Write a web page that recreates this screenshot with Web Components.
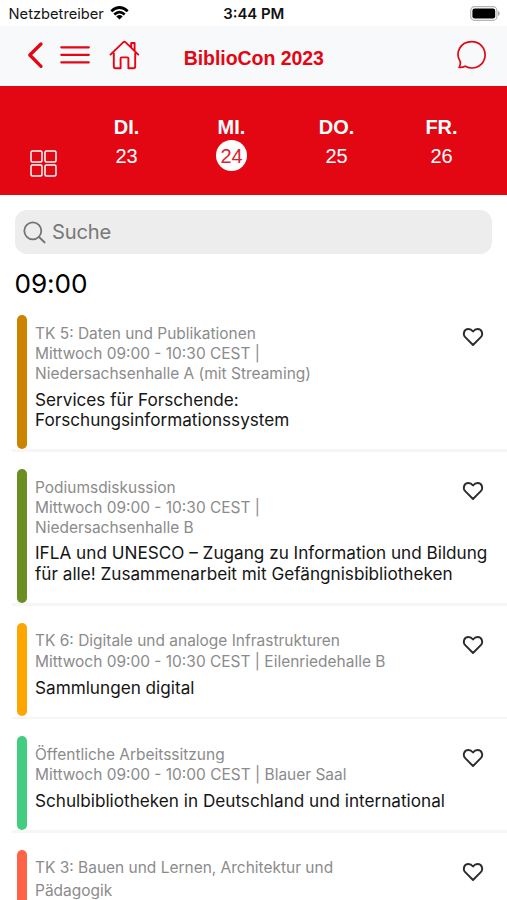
<!DOCTYPE html>
<html lang="de"><head><meta charset="utf-8"><title>BiblioCon 2023</title>
<style>html,body{margin:0;background:#fff}body{height:900px;overflow:hidden;font-family:Inter,"Liberation Sans",sans-serif}</style>
</head><body>
<programme-app></programme-app>
<script>
const define = (name, html) => customElements.define(name, class extends HTMLElement {
  constructor() {
    super();
    const t = document.createElement('template');
    t.innerHTML = html;
    this.attachShadow({mode: 'open'}).append(t.content.cloneNode(true));
  }
});

define('status-bar', `
<style>
:host{display:grid;grid-template-columns:1fr auto 1fr;align-items:center;height:26px;box-sizing:border-box;padding:1px 7px 0 8.5px;color:#151515;background:#fff}
.left{display:flex;align-items:center;gap:6px;font-size:14.7px;line-height:20px}
.time{font-size:14.9px;font-weight:600;line-height:20px;color:#111;margin-left:-1px}
.right{display:flex;justify-content:flex-end}
svg{display:block}
</style>
<div class="left"><span>Netzbetreiber</span>
<svg width="19" height="15" viewBox="0 0 19 15"><g fill="none" stroke="#000" stroke-width="2.7"><path d="M1.3 5.2Q9.5-2.2 17.7 5.2"/><path d="M4.3 8.5Q9.5 3.8 14.7 8.5"/></g><path d="M6.3 10.4Q9.5 7.8 12.7 10.4L9.5 13.6Z"/></svg></div>
<div class="time">3:44 PM</div>
<div class="right"><svg width="30" height="15" viewBox="0 0 30 15"><rect x=".7" y=".7" width="26.2" height="13.6" rx="3.8" fill="#fff" stroke="#b4b4b4" stroke-width="1.2"/><rect x="2.4" y="2.4" width="22.8" height="10.2" rx="2.3"/><path d="M28 5v5q1.8-.7 1.8-2.5T28 5Z" fill="#aaa"/></svg></div>`);

define('nav-bar', `
<style>
:host{display:grid;grid-template-columns:1fr auto 1fr;align-items:center;height:60px;box-sizing:border-box;padding:0 20px 0 26.5px;background:#f8f9fb;color:#e30613}
.left{display:flex;align-items:center;margin-top:-3px}
.right{display:flex;justify-content:flex-end;margin-top:-3px}
svg{display:block;fill:none;stroke:currentColor;stroke-linecap:round;stroke-linejoin:round}
.menu{margin-left:16px}.home{margin-left:19.5px}
.title{font:700 19.5px/24px "Liberation Sans",Arial,sans-serif;padding-top:4px;margin:0 3px 0 -3px;letter-spacing:-.05px}
</style>
<div class="left">
<svg width="17" height="28" viewBox="0 0 17 28" stroke-width="3.3"><path d="M14 3 2.8 14 14 25.3"/></svg>
<svg class="menu" width="30" height="20" viewBox="0 0 30 20" stroke-width="2.2"><path d="M1.3 2.3h27.5M1.3 9.8h27.5M1.3 17.3h27.5"/></svg>
<svg class="home" width="31" height="30" viewBox="0 0 31 30" stroke-width="1.9"><path d="M4.8 13.2v13.3q0 1.8 1.8 1.8h5V18.4q0-1 1-1h5.8q1 0 1 1v9.9h5q1.8 0 1.8-1.8V13.2"/><path d="M1.5 14.6 14.4 2.1q1-.9 2 0l12.9 12.5M22.2 7.5V3h3.4v7.7"/></svg>
</div>
<div class="title"><slot></slot></div>
<div class="right"><svg width="31" height="30" viewBox="0 0 31 30" stroke-width="1.7"><path d="M4.2 21.5C-1.3 12.6 4.5 1.7 15.7 1.7c7.9 0 13.4 6 13.4 13.1 0 7.3-5.6 13.2-13.2 13.2-2.6 0-4.8-.8-6.6-1.8-1.7.9-4.2 1.4-6.2 1.2.9-1.7 1.6-3.9 1.1-5.9Z"/></svg></div>`);

define('day-tab', `
<style>
:host{display:flex;flex-direction:column;align-items:center;width:105px;color:#fff;font-family:"Liberation Sans",Arial,sans-serif}
.name{font-size:20px;font-weight:700;line-height:24px}
.num{display:grid;place-items:center;width:31px;height:31px;margin-top:1px;padding-top:2px;box-sizing:border-box;border-radius:50%;font-size:20px;line-height:23px;letter-spacing:-.1px}
:host([selected]) .num{background:#fff;color:#d9232e}
</style>
<div class="name"><slot name="name"></slot></div><div class="num"><slot></slot></div>`);

define('day-bar', `
<style>
:host{display:flex;height:109px;box-sizing:border-box;padding:29px 0 0;background:#e30613}
.grid{width:74px;padding:34.5px 0 0 30px;box-sizing:border-box}
svg{display:block;fill:none;stroke:#fff;stroke-width:1.5}
</style>
<div class="grid"><svg width="27" height="27" viewBox="0 0 27 27"><rect x="1" y="1" width="11" height="11" rx="1.5"/><rect x="15" y="1" width="11" height="11" rx="1.5"/><rect x="1" y="15" width="11" height="11" rx="1.5"/><rect x="15" y="15" width="11" height="11" rx="1.5"/></svg></div>
<slot></slot>`);

define('search-field', `
<style>
:host{display:flex;align-items:center;gap:6px;height:44px;margin:15px 15px 0;box-sizing:border-box;padding:0 8px;border-radius:12px;background:#ededed;color:#777;font-size:20.1px;line-height:26px;letter-spacing:-.15px}
svg{display:block;fill:none;stroke:#747474;stroke-width:1.8;stroke-linecap:round}
</style>
<svg width="23" height="23" viewBox="0 0 23 23"><circle cx="9.8" cy="9.8" r="8.5"/><path d="m16 16 5.7 5.5"/></svg><span><slot></slot></span>`);

define('time-heading', `
<style>:host{display:block;height:61px;box-sizing:border-box;padding:14px 0 0 14.5px;font-size:26.2px;line-height:32px;letter-spacing:-.1px;color:#000}</style><slot></slot>`);

define('session-item', `
<style>
:host{display:block;padding-left:16.5px;margin-bottom:20px}
.row{display:flex;align-items:stretch}
.bar{flex:none;width:10px;border-radius:5px;background:var(--track)}
.body{flex:1;min-width:0;padding:6.7px 0 17.9px 8.5px}
.head{display:flex;justify-content:space-between}
.meta{font-size:15.48px;color:#8b8b8b}
.cat{line-height:23px}
.time{line-height:19.7px;margin-top:-.5px}
.title{font-size:17.16px;line-height:20.7px;color:#151515;margin-top:6px;white-space:nowrap}
svg{flex:none;display:block;width:22px;height:20px;margin:5.3px 23.5px 0 0;fill:none;stroke:#2c2c2c;stroke-width:1.9;stroke-linejoin:round}
.line{height:2.5px;margin:.3px 0 -2.8px -5px;background:#f6f6f6}
</style>
<div class="row"><div class="bar"></div><div class="body">
<div class="head"><div class="meta"><div class="cat"><slot name="category"></slot></div><div class="time"><slot name="time"></slot></div></div>
<svg viewBox="0 0 22 20"><path d="M11 18 3.2 10.2C.6 7.5 1.8 2 6.4 2c2 0 3.3.8 4.6 2.5C12.3 2.8 13.6 2 15.6 2c4.6 0 5.8 5.5 3.2 8.2Z"/></svg></div>
<div class="title"><slot></slot></div></div></div>
<div class="line"></div>`);

define('programme-app', `
<style>:host{display:block;width:507px;height:900px;overflow:hidden;background:#fff}</style>
<status-bar></status-bar>
<nav-bar>BiblioCon 2023</nav-bar>
<day-bar>
<day-tab><span slot="name">DI.</span>23</day-tab>
<day-tab selected><span slot="name">MI.</span>24</day-tab>
<day-tab><span slot="name">DO.</span>25</day-tab>
<day-tab><span slot="name">FR.</span>26</day-tab>
</day-bar>
<search-field>Suche</search-field>
<time-heading>09:00</time-heading>
<session-item style="--track:#cc8400"><span slot="category">TK 5: Daten und Publikationen</span><span slot="time">Mittwoch 09:00 - 10:30 CEST |<br>Niedersachsenhalle A (mit Streaming)</span>Services für Forschende:<br>Forschungsinformationssystem</session-item>
<session-item style="--track:#6b8e23"><span slot="category">Podiumsdiskussion</span><span slot="time">Mittwoch 09:00 - 10:30 CEST |<br>Niedersachsenhalle B</span>IFLA und UNESCO – Zugang zu Information und Bildung<br>für alle! Zusammenarbeit mit Gefängnisbibliotheken</session-item>
<session-item style="--track:#ffa500"><span slot="category">TK 6: Digitale und analoge Infrastrukturen</span><span slot="time">Mittwoch 09:00 - 10:30 CEST | Eilenriedehalle B</span>Sammlungen digital</session-item>
<session-item style="--track:#43cd80"><span slot="category">Öffentliche Arbeitssitzung</span><span slot="time">Mittwoch 09:00 - 10:00 CEST | Blauer Saal</span>Schulbibliotheken in Deutschland und international</session-item>
<session-item style="--track:#ff6347"><span slot="category">TK 3: Bauen und Lernen, Architektur und<br>Pädagogik</span></session-item>`);
</script>
</body></html>
